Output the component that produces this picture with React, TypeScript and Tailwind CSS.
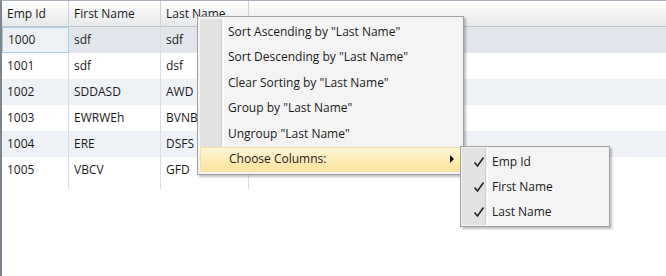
import React from "react";

const rows = [
  ["1000", "sdf", "sdf"],
  ["1001", "sdf", "dsf"],
  ["1002", "SDDASD", "AWD"],
  ["1003", "EWRWEh", "BVNB"],
  ["1004", "ERE", "DSFS"],
  ["1005", "VBCV", "GFD"],
];

const menuItems = [
  'Sort Ascending by "Last Name"',
  'Sort Descending by "Last Name"',
  'Clear Sorting by "Last Name"',
  'Group by "Last Name"',
  'Ungroup "Last Name"',
];

const columns = ["Emp Id", "First Name", "Last Name"];

function Check() {
  return (
    <svg width="12" height="12" viewBox="0 0 12 12">
      <path d="M1.5 6.5 L4.5 10 L10.5 1.5" fill="none" stroke="#222" strokeWidth="1.6" />
    </svg>
  );
}

export default function App() {
  return (
    <div
      className="relative w-[666px] h-[276px] overflow-hidden bg-white text-[12px] text-[#1b1b1b]"
      style={{ fontFamily: '"Open Sans", "DejaVu Sans", sans-serif' }}
    >
      <div className="flex flex-col h-full border-l-2 border-t border-l-[#7d8590] border-t-[#a7afba]">
        {/* header */}
        <div className="flex h-[26px] border-b border-[#c2c6cc] bg-gradient-to-b from-white to-[#e6e8ea]">
          <div className="w-[67px] border-r border-[#cfd2d6] pl-[5px] flex items-center">Emp Id</div>
          <div className="w-[92px] border-r border-[#cfd2d6] pl-[5px] flex items-center">First Name</div>
          <div className="w-[88px] border-r border-[#cfd2d6] pl-[5px] flex items-center">Last Name</div>
          <div className="flex-1" />
        </div>
        {/* rows */}
        {rows.map((r, i) => (
          <div
            key={r[0]}
            className={
              "flex h-[26px] " +
              (i === 0 ? "bg-[#e2e6ec]" : i % 2 === 0 ? "bg-[#eef1f6]" : "bg-white")
            }
          >
            <div
              className={
                "w-[67px] border-r flex items-center pl-[5px] " +
                (i === 0 ? "border border-[#9fd0e6] bg-[#edf1f5]" : "border-[#d9dce0]")
              }
            >
              {r[0]}
            </div>
            <div className="w-[92px] border-r border-[#d9dce0] flex items-center pl-[5px]">{r[1]}</div>
            <div className="w-[88px] border-r border-[#d9dce0] flex items-center pl-[5px]">{r[2]}</div>
            <div className="flex-1" />
          </div>
        ))}
        <div className="flex flex-1">
          <div className="w-[67px] border-r border-[#d9dce0] h-[6px]" />
          <div className="w-[92px] border-r border-[#d9dce0] h-[6px]" />
          <div className="w-[88px] border-r border-[#d9dce0] h-[6px]" />
        </div>
      </div>

      {/* context menu */}
      <div className="absolute left-[197px] top-[16px] w-[267px] border border-[#a0a0a0] bg-[#f4f4f4] shadow-[2px_2px_2px_rgba(0,0,0,0.25)] p-[2px]">
        <div className="absolute left-[2px] top-[2px] bottom-[2px] w-[22px] bg-[#e2e2e2] border-r border-[#d0d0d0]" />
        <div className="absolute left-[25px] top-[2px] bottom-[2px] w-px bg-white" />
        {menuItems.map((t) => (
          <div key={t} className="relative h-[25.5px] flex items-center pl-[28px]">
            {t}
          </div>
        ))}
        <div className="relative h-[25.5px] flex items-center pl-[28px] pr-[6px] bg-gradient-to-b from-[#fdf6d6] to-[#fce39a] border border-[#f3e2a6]">
          <span className="flex-1">Choose Columns:</span>
          <span className="w-0 h-0 border-y-[4px] border-y-transparent border-l-[4px] border-l-[#111]" />
        </div>
      </div>

      {/* submenu */}
      <div className="absolute left-[460px] top-[146px] w-[150px] border border-[#a0a0a0] bg-[#f4f4f4] shadow-[2px_2px_2px_rgba(0,0,0,0.25)] p-[2px]">
        <div className="absolute left-[1px] top-[1px] bottom-[1px] w-[24px] bg-[#e2e2e2] border-r border-[#d0d0d0]" />
        <div className="absolute left-[26px] top-[1px] bottom-[1px] w-px bg-white" />
        {columns.map((c) => (
          <div key={c} className="relative h-[25px] flex items-center">
            <span className="w-[29px] flex justify-center pl-[2px]">
              <Check />
            </span>
            {c}
          </div>
        ))}
      </div>
    </div>
  );
}
